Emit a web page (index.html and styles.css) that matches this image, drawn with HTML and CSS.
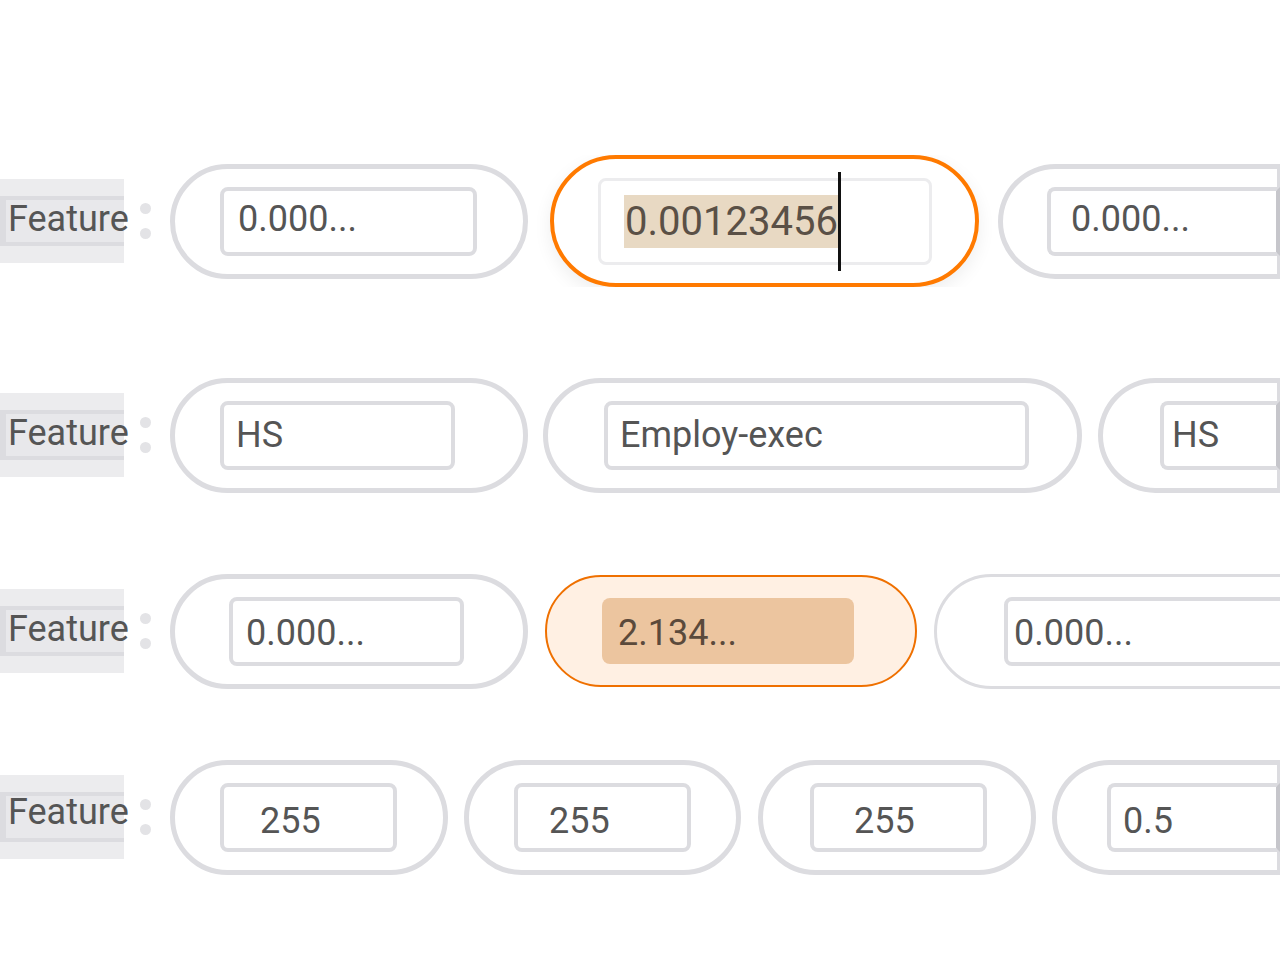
FILE: index.html
```html
<!DOCTYPE html>
<html lang="en">
<head>
<meta charset="utf-8">
<title>Feature rows</title>
<link rel="stylesheet" href="styles.css">
</head>
<body>
<div class="canvas">
  <div class="row r1">
    <div class="label"><div class="band"><span>Feature</span></div></div>
    <div class="colon"><i></i><i></i></div>
    <div class="pill a1"><div class="field fa1">0.000...</div></div>
    <div class="pill active b1"><div class="field fb1"><span class="sel">0.00123456</span><span class="caret"></span></div></div>
    <div class="pill edge c1"><div class="field edgefield fc1">0.000...</div></div>
  </div>
  <div class="row r2">
    <div class="label"><div class="band"><span>Feature</span></div></div>
    <div class="colon"><i></i><i></i></div>
    <div class="pill a2"><div class="field fa2">HS</div></div>
    <div class="pill b2"><div class="field fb2">Employ-exec</div></div>
    <div class="pill edge c2"><div class="field edgefield fc2">HS</div></div>
  </div>
  <div class="row r3">
    <div class="label"><div class="band"><span>Feature</span></div></div>
    <div class="colon"><i></i><i></i></div>
    <div class="pill a3"><div class="field fa3">0.000...</div></div>
    <div class="pill hot b3"><div class="field hotfield fb3">2.134...</div></div>
    <div class="pill thin c3"><div class="field fc3">0.000...</div></div>
  </div>
  <div class="row r4">
    <div class="label"><div class="band"><span>Feature</span></div></div>
    <div class="colon"><i></i><i></i></div>
    <div class="pill a4"><div class="field fa4">255</div></div>
    <div class="pill b4"><div class="field fb4">255</div></div>
    <div class="pill c4"><div class="field fc4">255</div></div>
    <div class="pill edge d4"><div class="field edgefield fd4">0.5</div></div>
  </div>
</div>
</body>
</html>
```
FILE: styles.css
```css
html, body {
  margin: 0;
  padding: 0;
  background: #ffffff;
}
body {
  font-family: Roboto, "Liberation Sans", sans-serif;
  color: #555555;
}
.canvas {
  width: 1280px;
  height: 960px;
  overflow: hidden;
}
.row {
  display: flex;
  align-items: center;
  height: 132px;
  width: 1280px;
  overflow: hidden;
}
.r1 { margin-top: 155px; }
.r2 { margin-top: 82px; }
.r3 { margin-top: 64px; }
.r4 { margin-top: 54px; }

.label {
  flex: none;
  width: 124px;
  height: 84px;
  background: #ececee;
  display: flex;
  align-items: center;
}
.band {
  box-sizing: border-box;
  width: 124px;
  height: 50px;
  border-top: 4px solid #dcdce0;
  border-bottom: 4px solid #dcdce0;
  border-left: 6px solid #dcdce0;
  background: #e8e8eb;
  padding-left: 2px;
  padding-bottom: 4px;
  display: flex;
  align-items: center;
  white-space: nowrap;
  font-size: 36px;
  line-height: 42px;
  color: #555555;
}
.r4 .band { padding-bottom: 10px; }
.colon {
  flex: none;
  margin-left: 16px;
  width: 11px;
  height: 36px;
  display: flex;
  flex-direction: column;
  justify-content: space-between;
}
.colon i {
  display: block;
  width: 11px;
  height: 11px;
  border-radius: 50%;
  background: #e3e3e6;
}

.pill {
  flex: none;
  box-sizing: border-box;
  height: 115px;
  border: 5px solid #dcdce0;
  border-radius: 60px;
  display: flex;
  align-items: center;
  background: #ffffff;
}
.field {
  flex: none;
  box-sizing: border-box;
  height: 69px;
  border: 4px solid #dcdce0;
  border-radius: 8px;
  display: flex;
  align-items: center;
  font-size: 36px;
  line-height: 42px;
  color: #555555;
  white-space: nowrap;
}
.r1 .field { padding-bottom: 4px; }
.r3 .field { padding-top: 4px; }
.r4 .field { padding-top: 8px; }

.edge {
  flex: 1;
  border-right-width: 3px;
  border-radius: 60px 0 0 60px;
}
.edgefield {
  flex: 1;
  margin-right: -3px;
  border-right-color: #c6c6cb;
  border-radius: 8px 0 0 8px;
}

/* row 1 */
.a1 { margin-left: 19px; width: 358px; padding-left: 45px; }
.fa1 { width: 257px; padding-left: 14px; }
.active {
  height: 132px;
  border: 4px solid #ff7a00;
  border-radius: 70px;
  box-shadow: 0 6px 18px rgba(0, 0, 0, 0.07);
}
.b1 { margin-left: 22px; width: 429px; padding-left: 44px; }
.r1 .fb1 {
  width: 334px;
  height: 87px;
  border: 3px solid #ececee;
  padding-left: 23px;
  padding-bottom: 0;
  color: #5a5046;
}
.sel {
  background: #e8d9c3;
  font-size: 40px;
  line-height: 53px;
  padding-left: 1px;
}
.caret {
  flex: none;
  width: 3px;
  height: 99px;
  background: #111111;
}
.c1 { margin-left: 19px; padding-left: 44px; }
.fc1 { padding-left: 20px; }

/* row 2 */
.a2 { margin-left: 19px; width: 358px; padding-left: 45px; }
.fa2 { width: 235px; padding-left: 12px; }
.b2 { margin-left: 15px; width: 539px; padding-left: 56px; }
.fb2 { width: 425px; padding-left: 12px; }
.c2 { margin-left: 16px; padding-left: 57px; }
.fc2 { padding-left: 8px; }

/* row 3 */
.a3 { margin-left: 19px; width: 358px; padding-left: 54px; }
.fa3 { width: 235px; padding-left: 13px; }
.hot {
  height: 112px;
  border: 2px solid #ef7000;
  background: #fff0e3;
}
.b3 { margin-left: 17px; width: 372px; padding-left: 55px; }
.hotfield {
  height: 66px;
  border: none;
  background: #ecc59f;
  color: #5b4a3b;
}
.fb3 { width: 252px; padding-left: 16px; }
.thin { border-width: 3px; }
.c3 { margin-left: 17px; width: 420px; padding-left: 67px; }
.fc3 { width: 400px; padding-left: 6px; }

/* row 4 */
.a4 { margin-left: 19px; width: 278px; padding-left: 45px; }
.fa4 { width: 177px; padding-left: 36px; }
.b4 { margin-left: 16px; width: 277px; padding-left: 45px; }
.fb4 { width: 177px; padding-left: 31px; }
.c4 { margin-left: 17px; width: 278px; padding-left: 47px; }
.fc4 { width: 177px; padding-left: 40px; }
.d4 { margin-left: 16px; padding-left: 50px; }
.fd4 { padding-left: 12px; }
```
